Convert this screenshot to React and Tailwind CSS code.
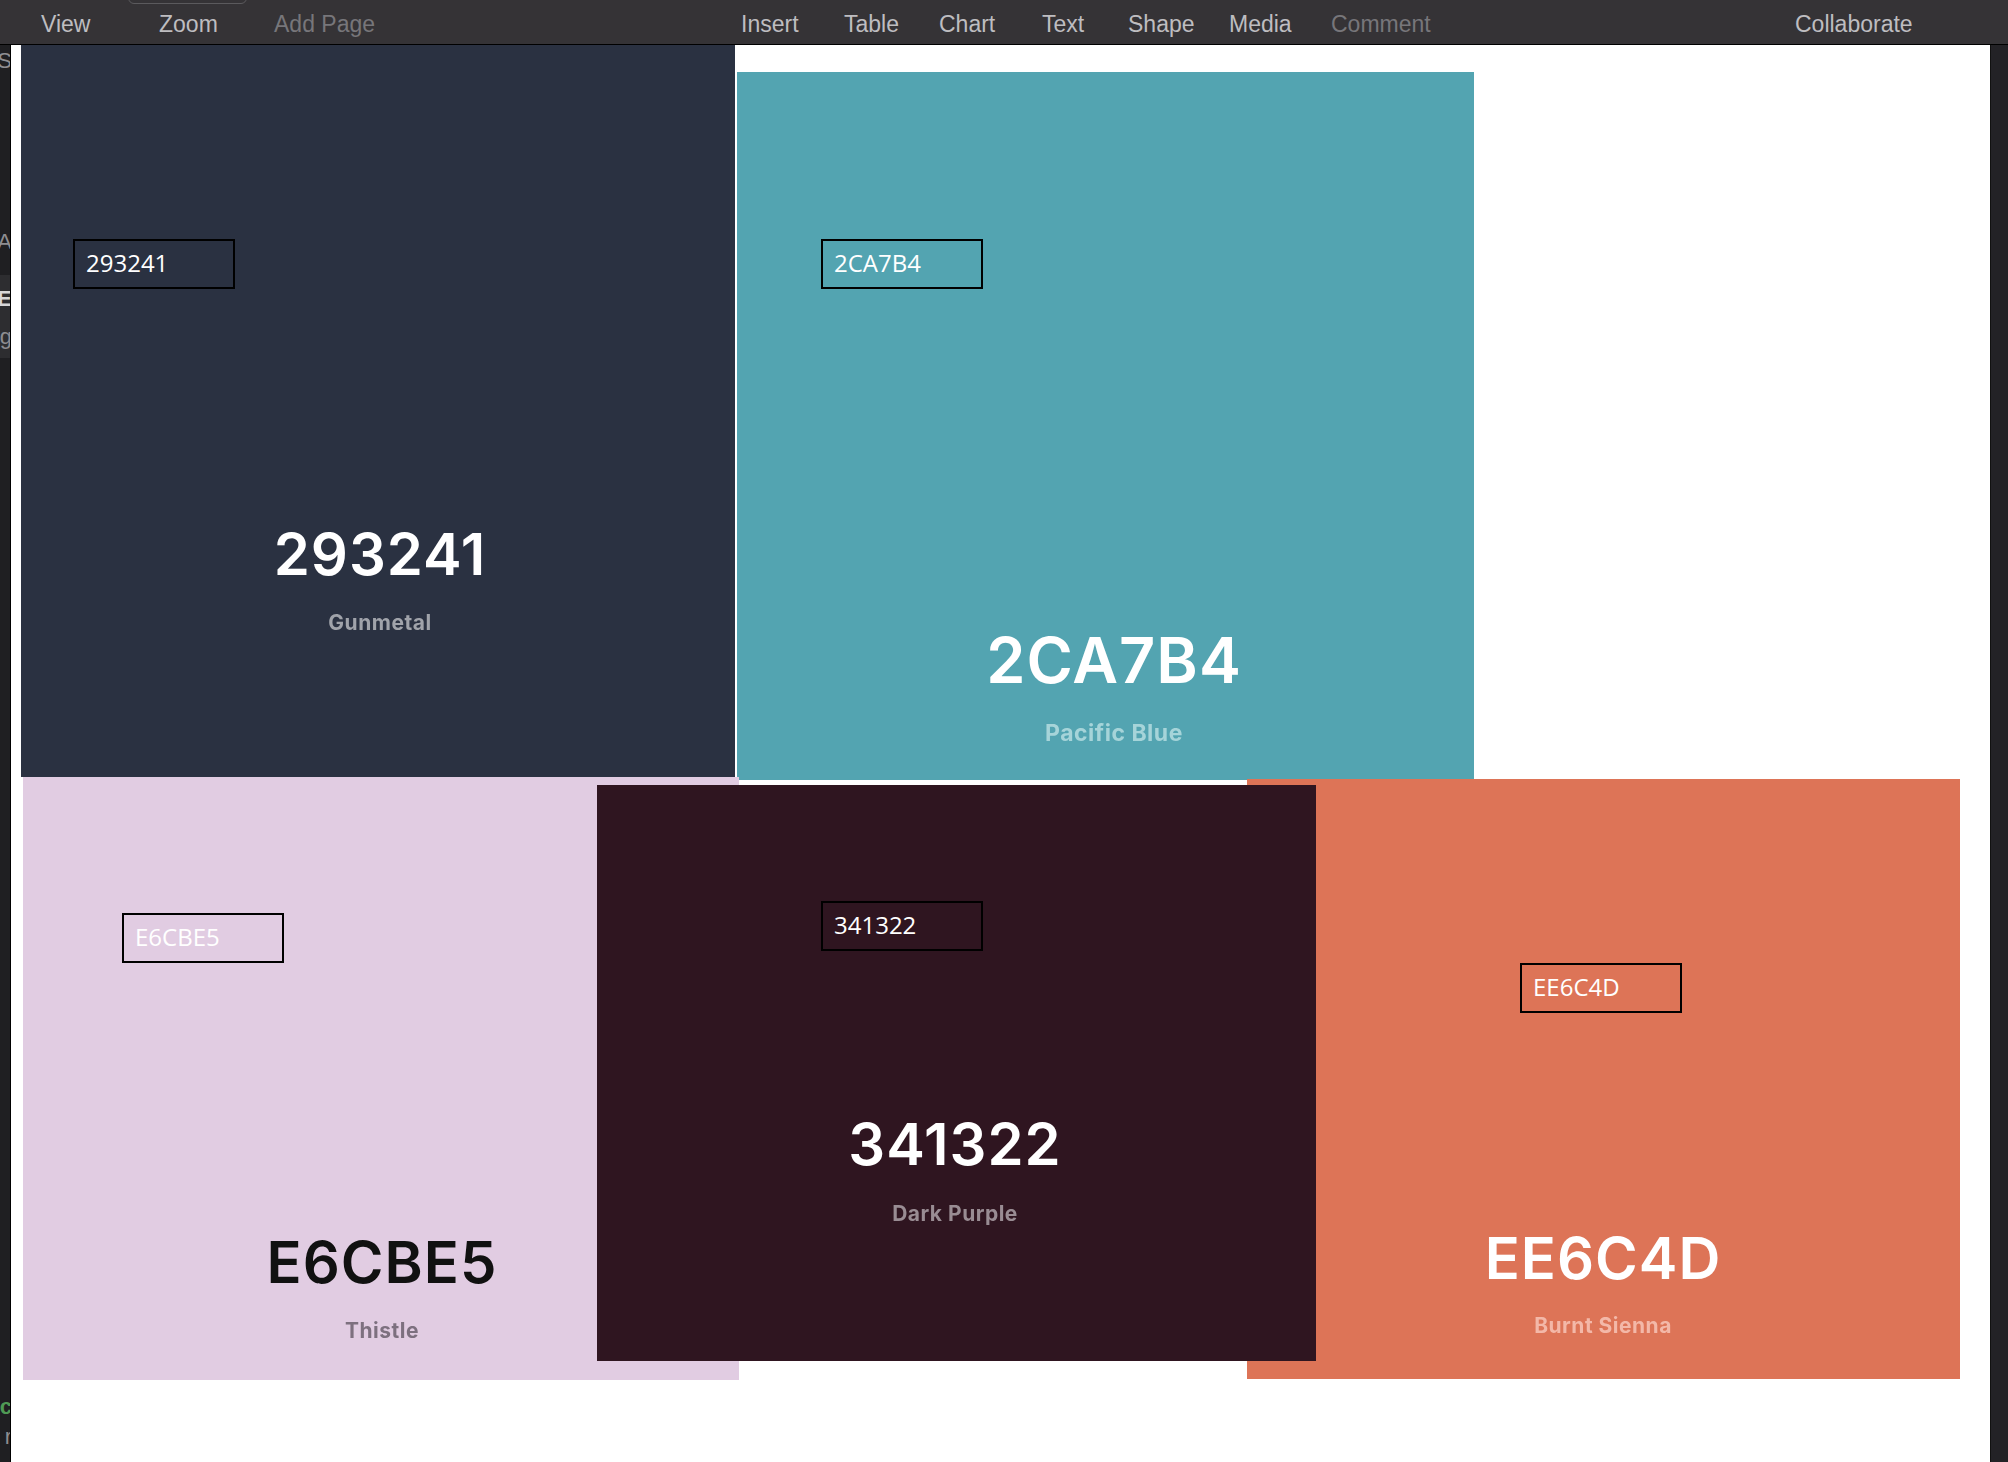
import React from 'react';

// toolbar items, each in a fixed-width slot so they land where the app puts them
const MENU = [
  { label: 'View', w: 'w-[118px]' },
  { label: 'Zoom', w: 'w-[115px]' },
  { label: 'Add Page', w: 'w-[467px]', dim: true },
  { label: 'Insert', w: 'w-[103px]' },
  { label: 'Table', w: 'w-[95px]' },
  { label: 'Chart', w: 'w-[103px]' },
  { label: 'Text', w: 'w-[86px]' },
  { label: 'Shape', w: 'w-[101px]' },
  { label: 'Media', w: 'w-[102px]' },
  { label: 'Comment', w: 'w-[464px]', dim: true },
  { label: 'Collaborate', w: '' },
];

const SWATCHES = [
  {
    hex: '293241', name: 'Gunmetal',
    box: 'left-[10px] top-0 w-[714px] h-[732px] bg-[#2a3141]',
    label: 'left-[52px] top-[194px]',
    text: 'left-[359px] top-[479px]',
    big: 'text-white text-[58px] leading-[60px]', small: 'text-[#a0a3aa] text-[21px] leading-[24px] mt-[27px]',
  },
  {
    hex: '2CA7B4', name: 'Pacific Blue',
    box: 'left-[726px] top-[27px] w-[737px] h-[708px] bg-[#53a4b1]',
    label: 'left-[84px] top-[167px]',
    text: 'left-[377px] top-[555px]',
    big: 'text-white text-[63px] leading-[66px]', small: 'text-[#a6d4d9] text-[23px] leading-[28px] mt-[26px]',
  },
  {
    hex: 'E6CBE5', name: 'Thistle',
    box: 'left-[12px] top-[732px] w-[716px] h-[603px] bg-[#e1cce2]',
    label: 'left-[99px] top-[136px]',
    text: 'left-[359px] top-[455px]',
    big: 'text-[#111111] text-[58px] leading-[60px]', small: 'text-[#7d707f] text-[21px] leading-[24px] mt-[27px]',
  },
  {
    hex: 'EE6C4D', name: 'Burnt Sienna',
    box: 'left-[1236px] top-[734px] w-[713px] h-[600px] bg-[#dd7457]',
    label: 'left-[273px] top-[184px]',
    text: 'left-[356px] top-[449px]',
    big: 'text-white text-[58px] leading-[60px]', small: 'text-[#f3b8a8] text-[21px] leading-[24px] mt-[26px]',
  },
  {
    hex: '341322', name: 'Dark Purple',
    box: 'left-[586px] top-[740px] w-[719px] h-[576px] bg-[#2f1520]',
    label: 'left-[224px] top-[116px]',
    text: 'left-[358px] top-[329px]',
    big: 'text-white text-[58px] leading-[60px]', small: 'text-[#998c93] text-[21px] leading-[24px] mt-[28px]',
  },
];

function Swatch({ s }) {
  return (
    <div className={`absolute ${s.box}`}>
      {/* pasted label */}
      <div className={`absolute ${s.label} w-[162px] h-[50px] border-2 border-black flex items-center pl-[11px] pb-[3px] font-['Open_Sans',sans-serif] text-[24px] text-white`}>
        {s.hex}
      </div>
      {/* palette image text */}
      <div className={`absolute ${s.text} -translate-x-1/2 flex flex-col items-center blur-[0.6px] font-['Inter',sans-serif]`}>
        <p className={`font-semibold tracking-[1px] whitespace-nowrap ${s.big}`}>{s.hex}</p>
        <p className={`font-bold tracking-[0.5px] whitespace-nowrap ${s.small}`}>{s.name}</p>
      </div>
    </div>
  );
}

function Clip({ h, children, className = '' }) {
  return (
    <div className={`flex items-center justify-end whitespace-nowrap ${className}`} style={{ height: h }}>
      <span className="-mr-[2px]">{children}</span>
    </div>
  );
}

export default function App() {
  return (
    <div className="w-[2008px] h-[1462px] flex flex-col overflow-hidden bg-white font-['Liberation_Sans',sans-serif]">
      {/* Toolbar */}
      <header className="relative h-[45px] shrink-0 bg-[#353336] border-b border-black flex items-center pl-[41px] pt-[4px] text-[23px] text-[#bebdc0]">
        <div className="absolute left-[128px] -top-[20px] w-[119px] h-[24px] rounded-md border border-[#5b5a5d]" />
        {MENU.map(m => (
          <span key={m.label} className={`shrink-0 whitespace-nowrap ${m.w} ${m.dim ? 'text-[#77767a]' : ''}`}>{m.label}</span>
        ))}
      </header>

      <div className="flex flex-1 min-h-0">
        {/* clipped sidebar */}
        <aside className="w-[11px] shrink-0 bg-[#1f1f22] border-r border-black overflow-hidden text-[22px] text-[#8e8d91]">
          <Clip h={30}>S</Clip>
          <div className="h-[151px]" />
          <Clip h={30}>A</Clip>
          <div className="h-[19px]" />
          <div className="h-[83px] bg-[#2d2d30] flex flex-col">
            <Clip h={46} className="text-[#d6d6d8] font-bold">E</Clip>
            <Clip h={30}>ng</Clip>
          </div>
          <div className="h-[1033px]" />
          <Clip h={30} className="text-[#4f9a55] font-bold">c</Clip>
          <Clip h={30}>r</Clip>
        </aside>

        {/* slide canvas */}
        <main className="relative flex-1 bg-white">
          {SWATCHES.map(s => <Swatch key={s.hex} s={s} />)}
        </main>

        <aside className="w-[18px] shrink-0 bg-[#232226] border-l border-[#111]" />
      </div>
    </div>
  );
}
